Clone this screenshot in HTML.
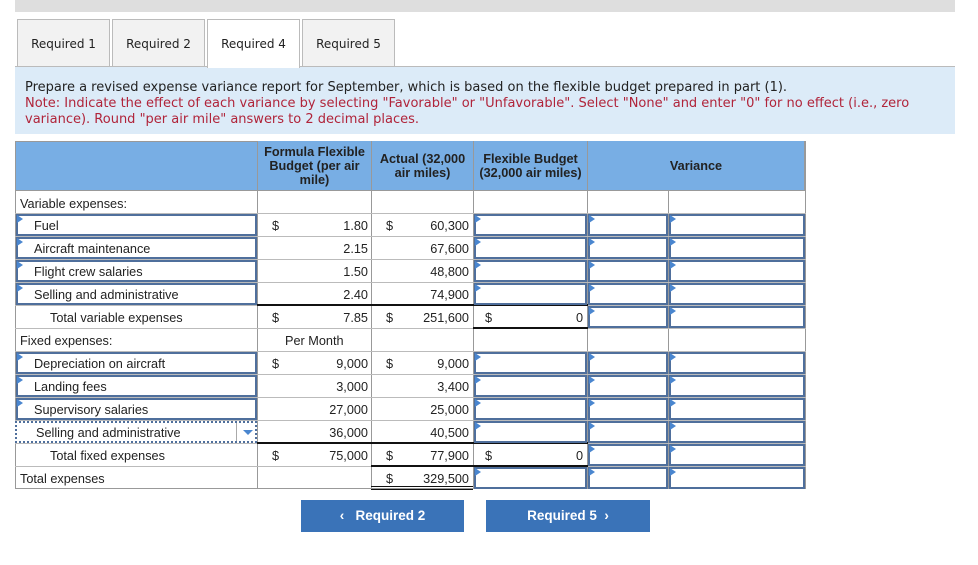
<!DOCTYPE html>
<html><head><meta charset="utf-8"><style>
*{margin:0;padding:0;box-sizing:border-box}
body{width:978px;height:565px;background:#fff;position:relative;overflow:hidden;font-family:"Liberation Sans",Arial,sans-serif;font-size:12.7px;color:#222}
.a{position:absolute}
.tab{position:absolute;top:19px;height:48px;width:93px;background:#f2f2f2;border:1px solid #bbb;border-bottom:none;font-family:"DejaVu Sans",Verdana,sans-serif;font-size:12px;line-height:48px;text-align:center;color:#222}
.t{position:absolute;height:23px;line-height:23px;white-space:nowrap;margin-top:1.5px}
.r{text-align:right}
.vl{position:absolute;width:1px;background:#999}
.hl{position:absolute;height:1px;background:#bbb}
.bl{position:absolute;height:2px;background:#111}
.in{position:absolute;border:2px solid #4f6f9c;background:#fff}
.in:before{content:"";position:absolute;left:-1px;top:-1px;border-left:6px solid #4a86cf;border-top:4px solid transparent;border-bottom:4px solid transparent}
.hd{position:absolute;top:141px;height:50px;background:#78aee4;font-weight:bold;font-size:12.7px;line-height:14px;text-align:center;display:flex;align-items:center;justify-content:center;color:#222}
.btn{position:absolute;top:500px;height:32px;background:#3a73b8;color:#fff;font-weight:bold;font-size:13.5px;line-height:32px;text-align:center}
</style></head><body>
<div class="a" style="left:15px;top:0;width:940px;height:12px;background:#dedede"></div>
<div class="tab" style="left:17px">Required 1</div>
<div class="tab" style="left:112px">Required 2</div>
<div class="tab" style="left:207px;background:#fff;z-index:2;height:49px">Required 4</div>
<div class="tab" style="left:302px">Required 5</div>
<div class="a" style="left:15px;top:66px;width:940px;height:68px;background:#dcebf8;border-top:1px solid #bbb;font-family:'DejaVu Sans',Verdana,sans-serif;font-size:13px;line-height:16px;padding:13px 20px 0 10px">
<div style="color:#222">Prepare a revised expense variance report for September, which is based on the flexible budget prepared in part (1).</div>
<div style="color:#b0243a">Note: Indicate the effect of each variance by selecting "Favorable" or "Unfavorable". Select "None" and enter "0" for no effect (i.e., zero variance). Round "per air mile" answers to 2 decimal places.</div>
</div>

<div class="a" style="left:15px;top:141px;width:790px;height:50px;background:#78aee4;border:1px solid #999"></div>
<div class="hd" style="left:258px;width:113px">Formula Flexible<br>Budget (per air<br>mile)</div>
<div class="hd" style="left:372px;width:101px">Actual (32,000<br>air miles)</div>
<div class="hd" style="left:474px;width:113px">Flexible Budget<br>(32,000 air miles)</div>
<div class="hd" style="left:588px;width:216px">Variance</div>

<div class="vl" style="left:15px;top:141px;height:348px"></div>
<div class="vl" style="left:257px;top:141px;height:348px"></div>
<div class="vl" style="left:371px;top:141px;height:348px"></div>
<div class="vl" style="left:473px;top:141px;height:348px"></div>
<div class="vl" style="left:587px;top:141px;height:348px"></div>
<div class="vl" style="left:668px;top:190px;height:299px"></div>
<div class="vl" style="left:805px;top:141px;height:348px"></div>
<div class="hl" style="left:15px;top:190px;width:791px;background:#999"></div>
<div class="hl" style="left:15px;top:213px;width:791px"></div>
<div class="hl" style="left:15px;top:236px;width:791px"></div>
<div class="hl" style="left:15px;top:259px;width:791px"></div>
<div class="hl" style="left:15px;top:282px;width:791px"></div>
<div class="hl" style="left:15px;top:305px;width:791px"></div>
<div class="hl" style="left:15px;top:328px;width:791px"></div>
<div class="hl" style="left:15px;top:351px;width:791px"></div>
<div class="hl" style="left:15px;top:374px;width:791px"></div>
<div class="hl" style="left:15px;top:397px;width:791px"></div>
<div class="hl" style="left:15px;top:420px;width:791px"></div>
<div class="hl" style="left:15px;top:443px;width:791px"></div>
<div class="hl" style="left:15px;top:466px;width:791px"></div>
<div class="hl" style="left:15px;top:488px;width:791px;background:#999"></div>
<div class="bl" style="left:257px;top:304px;width:331px"></div>
<div class="bl" style="left:473px;top:327px;width:115px"></div>
<div class="bl" style="left:257px;top:442px;width:331px"></div>
<div class="bl" style="left:371px;top:465px;width:217px"></div>
<div class="bl" style="left:371px;top:486px;width:102px;height:1px"></div>
<div class="bl" style="left:371px;top:489px;width:102px;height:1px"></div>

<div class="in" style="left:16px;top:214px;width:241px;height:22px"></div>
<div class="in" style="left:16px;top:237px;width:241px;height:22px"></div>
<div class="in" style="left:16px;top:260px;width:241px;height:22px"></div>
<div class="in" style="left:16px;top:283px;width:241px;height:22px"></div>
<div class="in" style="left:16px;top:352px;width:241px;height:22px"></div>
<div class="in" style="left:16px;top:375px;width:241px;height:22px"></div>
<div class="in" style="left:16px;top:398px;width:241px;height:22px"></div>
<div class="a" style="left:15px;top:421px;width:242px;height:22px;border:2px dotted #4f6f9c;background:#fff"></div>
<div class="a" style="left:236px;top:423px;width:1px;height:18px;background:#aaa"></div>
<div class="a" style="left:243px;top:430px;border-left:5px solid transparent;border-right:5px solid transparent;border-top:5px solid #4a86cf"></div>

<div class="in" style="left:474px;top:214px;width:113px;height:22px"></div>
<div class="in" style="left:474px;top:237px;width:113px;height:22px"></div>
<div class="in" style="left:474px;top:260px;width:113px;height:22px"></div>
<div class="in" style="left:474px;top:283px;width:113px;height:22px"></div>
<div class="in" style="left:474px;top:352px;width:113px;height:22px"></div>
<div class="in" style="left:474px;top:375px;width:113px;height:22px"></div>
<div class="in" style="left:474px;top:398px;width:113px;height:22px"></div>
<div class="in" style="left:474px;top:421px;width:113px;height:22px"></div>
<div class="in" style="left:474px;top:467px;width:113px;height:22px"></div>

<div class="in" style="left:588px;top:214px;width:80px;height:22px"></div>
<div class="in" style="left:588px;top:237px;width:80px;height:22px"></div>
<div class="in" style="left:588px;top:260px;width:80px;height:22px"></div>
<div class="in" style="left:588px;top:283px;width:80px;height:22px"></div>
<div class="in" style="left:588px;top:306px;width:80px;height:22px"></div>
<div class="in" style="left:588px;top:352px;width:80px;height:22px"></div>
<div class="in" style="left:588px;top:375px;width:80px;height:22px"></div>
<div class="in" style="left:588px;top:398px;width:80px;height:22px"></div>
<div class="in" style="left:588px;top:421px;width:80px;height:22px"></div>
<div class="in" style="left:588px;top:444px;width:80px;height:22px"></div>
<div class="in" style="left:588px;top:467px;width:80px;height:22px"></div>

<div class="in" style="left:669px;top:214px;width:136px;height:22px"></div>
<div class="in" style="left:669px;top:237px;width:136px;height:22px"></div>
<div class="in" style="left:669px;top:260px;width:136px;height:22px"></div>
<div class="in" style="left:669px;top:283px;width:136px;height:22px"></div>
<div class="in" style="left:669px;top:306px;width:136px;height:22px"></div>
<div class="in" style="left:669px;top:352px;width:136px;height:22px"></div>
<div class="in" style="left:669px;top:375px;width:136px;height:22px"></div>
<div class="in" style="left:669px;top:398px;width:136px;height:22px"></div>
<div class="in" style="left:669px;top:421px;width:136px;height:22px"></div>
<div class="in" style="left:669px;top:444px;width:136px;height:22px"></div>
<div class="in" style="left:669px;top:467px;width:136px;height:22px"></div>

<div class="t" style="left:20px;top:191px">Variable expenses:</div>
<div class="t" style="left:34px;top:213px">Fuel</div>
<div class="t" style="left:34px;top:236px">Aircraft maintenance</div>
<div class="t" style="left:34px;top:259px">Flight crew salaries</div>
<div class="t" style="left:34px;top:282px">Selling and administrative</div>
<div class="t" style="left:50px;top:305px">Total variable expenses</div>
<div class="t" style="left:20px;top:328px">Fixed expenses:</div>
<div class="t" style="left:34px;top:351px">Depreciation on aircraft</div>
<div class="t" style="left:34px;top:374px">Landing fees</div>
<div class="t" style="left:34px;top:397px">Supervisory salaries</div>
<div class="t" style="left:36px;top:420px">Selling and administrative</div>
<div class="t" style="left:50px;top:443px">Total fixed expenses</div>
<div class="t" style="left:20px;top:466px">Total expenses</div>

<div class="t" style="left:272px;top:213px">$</div>
<div class="t r" style="left:300px;width:68px;top:213px">1.80</div>
<div class="t r" style="left:300px;width:68px;top:236px">2.15</div>
<div class="t r" style="left:300px;width:68px;top:259px">1.50</div>
<div class="t r" style="left:300px;width:68px;top:282px">2.40</div>
<div class="t" style="left:272px;top:305px">$</div>
<div class="t r" style="left:300px;width:68px;top:305px">7.85</div>
<div class="t" style="left:285px;top:328px">Per Month</div>
<div class="t" style="left:272px;top:351px">$</div>
<div class="t r" style="left:300px;width:68px;top:351px">9,000</div>
<div class="t r" style="left:300px;width:68px;top:374px">3,000</div>
<div class="t r" style="left:300px;width:68px;top:397px">27,000</div>
<div class="t r" style="left:300px;width:68px;top:420px">36,000</div>
<div class="t" style="left:272px;top:443px">$</div>
<div class="t r" style="left:300px;width:68px;top:443px">75,000</div>

<div class="t" style="left:386px;top:213px">$</div>
<div class="t r" style="left:400px;width:69px;top:213px">60,300</div>
<div class="t r" style="left:400px;width:69px;top:236px">67,600</div>
<div class="t r" style="left:400px;width:69px;top:259px">48,800</div>
<div class="t r" style="left:400px;width:69px;top:282px">74,900</div>
<div class="t" style="left:386px;top:305px">$</div>
<div class="t r" style="left:400px;width:69px;top:305px">251,600</div>
<div class="t" style="left:386px;top:351px">$</div>
<div class="t r" style="left:400px;width:69px;top:351px">9,000</div>
<div class="t r" style="left:400px;width:69px;top:374px">3,400</div>
<div class="t r" style="left:400px;width:69px;top:397px">25,000</div>
<div class="t r" style="left:400px;width:69px;top:420px">40,500</div>
<div class="t" style="left:386px;top:443px">$</div>
<div class="t r" style="left:400px;width:69px;top:443px">77,900</div>
<div class="t" style="left:386px;top:466px">$</div>
<div class="t r" style="left:400px;width:69px;top:466px">329,500</div>

<div class="t" style="left:485px;top:305px">$</div>
<div class="t r" style="left:520px;width:63px;top:305px">0</div>
<div class="t" style="left:485px;top:443px">$</div>
<div class="t r" style="left:520px;width:63px;top:443px">0</div>

<div class="btn" style="left:301px;width:163px">&lsaquo;&nbsp;&nbsp; Required 2</div>
<div class="btn" style="left:486px;width:164px">Required 5 &nbsp;&rsaquo;</div>
</body></html>
